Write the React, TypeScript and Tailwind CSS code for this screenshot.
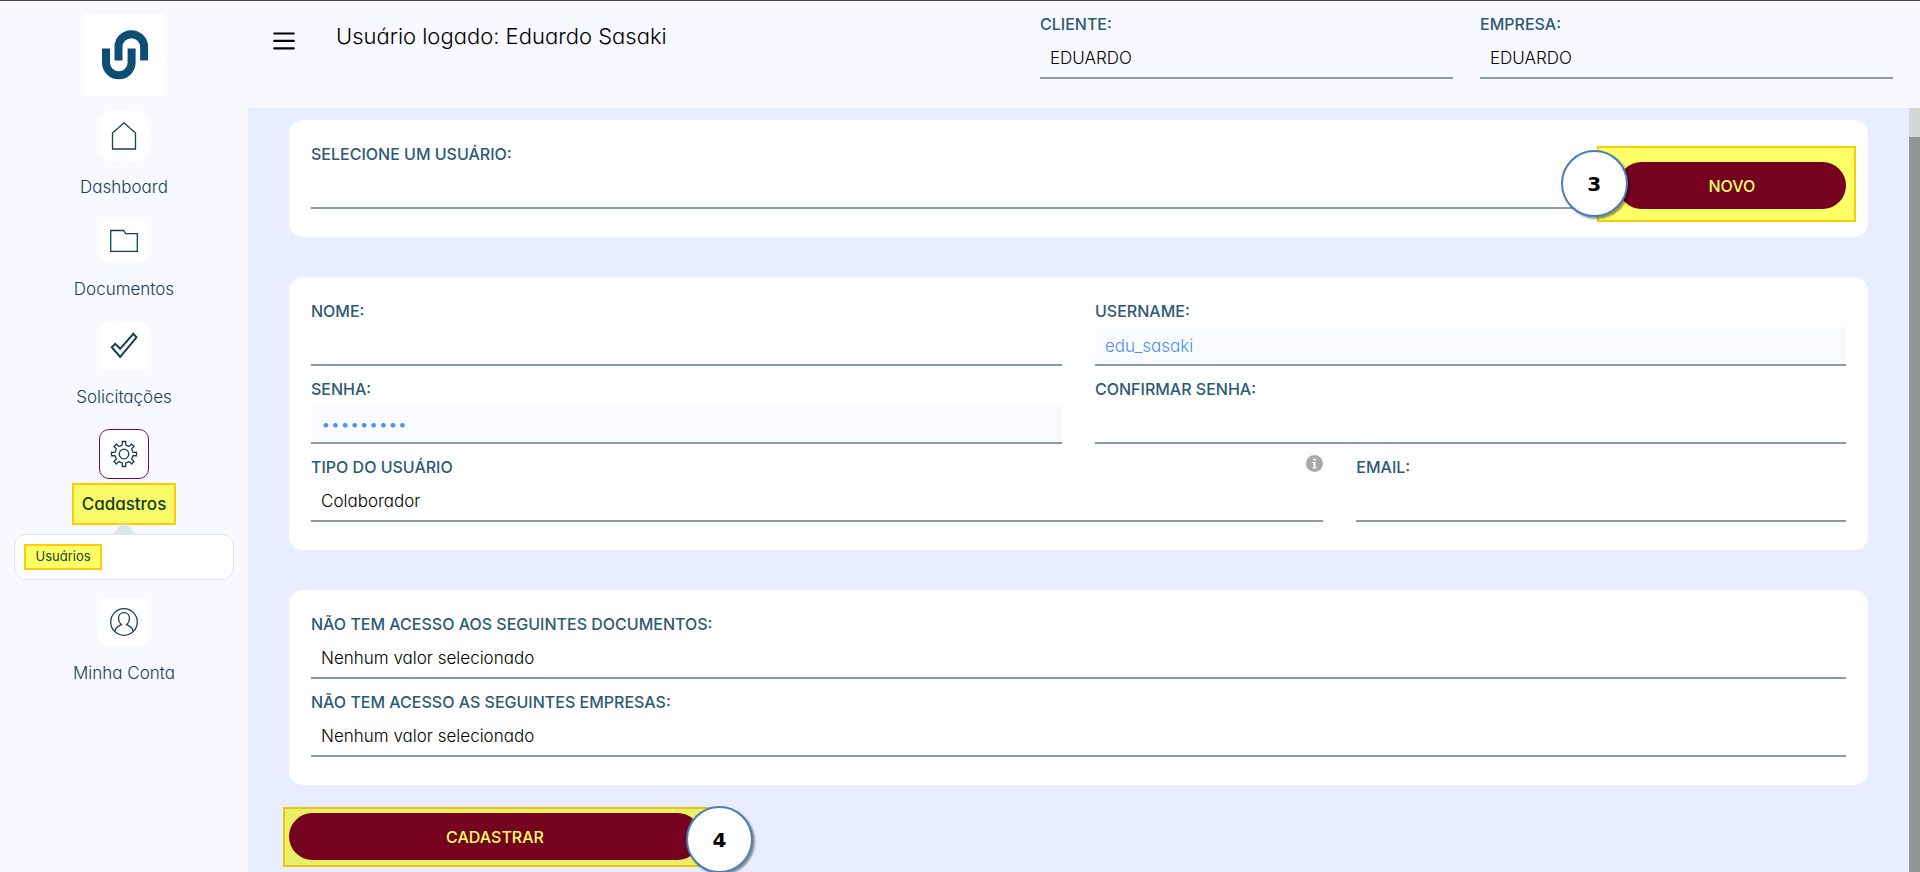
import type { ReactNode } from "react";

const GEAR = Array.from({ length: 8 }, (_, i) => {
  const at = (radius: number, offset: number) => {
    const a = ((i * 45 + offset - 90) * Math.PI) / 180;
    return `${(14 + radius * Math.cos(a)).toFixed(2)} ${(14 + radius * Math.sin(a)).toFixed(2)}`;
  };
  return `${i === 0 ? "M" : "A9 9 0 0 1 "}${at(9, -13)}L${at(9.6, -10)}L${at(12.6, -8)}L${at(12.6, 8)}L${at(9.6, 10)}L${at(9, 13)}`;
}).join("") + "Z";

function Logo() {
  return (
    <div className="flex h-[83px] w-[82px] items-center justify-center bg-white">
      <svg viewBox="-1 0 46 49" className="h-[49px] w-[46px] overflow-visible" fill="none" stroke="#0d4f74" strokeWidth="8" aria-hidden="true">
        <path d="M4 18.500v14a12.800 12.800 0 0 0 25.600 0v-14" />
        <path d="M16.500 30.500v-13.500a12.800 12.800 0 0 1 25.600 0v13.500" />
      </svg>
    </div>
  );
}

function Icon({ children }: { children: ReactNode }) {
  return (
    <svg viewBox="0 0 28 28" className="size-7" fill="none" stroke="#173f54" strokeWidth="1.3" aria-hidden="true">
      {children}
    </svg>
  );
}

function NavItem({ label, icon, tile = "h-[50px]" }: { label: string; icon: ReactNode; tile?: string }) {
  return (
    <a href="#" className="flex flex-col items-center gap-[14px] text-[17px] leading-6 text-[#173f54]">
      <span className={`flex w-[50px] items-center justify-center rounded-[10px] bg-white ${tile}`}>{icon}</span>
      {label}
    </a>
  );
}

function Sidebar() {
  return (
    <nav className="flex w-[248px] shrink-0 flex-col items-center pt-3">
      <Logo />
      <div className="mt-[15px] flex w-full flex-col items-center gap-5">
        <NavItem
          label="Dashboard"
          icon={<Icon><path d="M2.500 27V11L14 0.800 25.500 11v16z" /></Icon>}
        />
        <NavItem
          label="Documentos"
          tile="h-[44px]"
          icon={<Icon><path d="M0.700 3.500h13l2 3.200h11.600v17.600H0.700z" /></Icon>}
        />
        <NavItem
          label="Solicitações"
          icon={<Icon><path strokeWidth="2" d="M1.800 15.200l3.400-3.400 5 5L23.300 1.800l3.200 3.500L10.200 25z" /></Icon>}
        />
      </div>
      <a href="#" className="mt-5 flex flex-col items-center gap-1 text-[17px] font-medium leading-6 text-[#123f26]">
        <span className="flex size-[50px] items-center justify-center rounded-[10px] border border-[#7a0a54] bg-white">
          <Icon>
            <path d={GEAR} />
            <circle cx="14" cy="14" r="4.800" />
          </Icon>
        </span>
        <span className="flex h-[42px] w-[104px] items-center justify-center border-2 border-[#fdca0c] bg-[#f8fa66]">
          Cadastros
        </span>
      </a>
      <div className="relative mt-[9px] flex h-[46px] w-[220px] items-center rounded-xl border border-[#dbe7ea] bg-white px-[9px]">
        <svg viewBox="0 0 26 13" className="absolute -top-[13px] left-[96px] h-[13px] w-[26px]" aria-hidden="true">
          <path d="M0 13L13 0l13 13z" fill="#dbe7ea" />
          <path d="M10 3l3-3 3 3z" fill="#d8dd62" />
        </svg>
        <a href="#" className="flex h-[26px] w-[78px] items-center justify-center border-2 border-[#ffca0c] bg-[#ffff66] text-[13px] font-normal text-[#17432f]">
          Usuários
        </a>
      </div>
      <div className="mt-[17px]">
        <NavItem
          label="Minha Conta"
          icon={
            <Icon>
              <circle cx="14" cy="14" r="13.300" />
              <path d="M5 23.500c0-3.500 2.200-5 6.500-6.800-1.900-1.700-3-3.700-3-6 0-3.500 2.200-6 5.500-6s5.500 2.500 5.500 6c0 2.300-1.100 4.300-3 6 4.300 1.800 6.500 3.300 6.500 6.800" />
            </Icon>
          }
        />
      </div>
    </nav>
  );
}

const LABEL = "block text-base font-medium leading-6 text-[#2b5a75]";
const CONTROL = "mt-1 block h-[39px] w-full appearance-none rounded-none border-b-2 border-[#8b9aa8] px-[10px] text-[17px] outline-none";

function TextField({ id, label, span, value = "", type = "text" }: { id: string; label: string; span: string; value?: string; type?: string }) {
  return (
    <div className={span}>
      <label htmlFor={id} className={LABEL}>{label}</label>
      <input
        id={id}
        type={type}
        defaultValue={value}
        className={value ? `${CONTROL} bg-[#fafbfe] text-[#4d8eff]` : `${CONTROL} text-black`}
      />
    </div>
  );
}

function SelectField({ id, label, span = "", value = "", info = false }: { id: string; label: string; span?: string; value?: string; info?: boolean }) {
  return (
    <div className={span}>
      <div className="flex justify-between">
        <label htmlFor={id} className={LABEL}>{label}</label>
        {info && (
          <svg viewBox="0 0 17 17" className="size-[17px]" role="img" aria-label="Informação">
            <circle cx="8.500" cy="8.500" r="8.500" fill="#a9a9a9" />
            <path d="M8.500 3.200a1.200 1.200 0 1 1 0 2.400 1.200 1.200 0 0 1 0-2.400zM6.300 6.900h3.200v5.500h1.200v1.100H6.300v-1.100h1.200V8H6.300z" fill="#fff" />
          </svg>
        )}
      </div>
      <select id={id} className={`${CONTROL} text-black`}>
        <option>{value}</option>
      </select>
    </div>
  );
}

function Card({ children }: { children: ReactNode }) {
  return (
    <section className="grid grid-cols-12 gap-x-[33px] gap-y-[11px] rounded-[14px] bg-white px-[22px] pb-7 pt-[22px]">
      {children}
    </section>
  );
}

function Step({ n, place }: { n: number; place: string }) {
  return (
    <span className={`absolute flex size-[67px] items-center justify-center rounded-full border-2 border-[#4a7ebb] bg-white font-['DejaVu_Sans',sans-serif] text-xl font-bold text-black shadow-[2px_2px_2px_rgba(0,0,0,0.4)] ${place}`}>
      {n}
    </span>
  );
}

export default function App() {
  return (
    <div className="flex h-screen overflow-hidden border-t border-[#46464f] bg-[#f8f9ff] font-[Inter,sans-serif] font-light text-black [font-feature-settings:'cv11']">
      <Sidebar />
      <div className="flex min-w-0 flex-1 flex-col">
        <header className="flex h-[107px] shrink-0 items-start pl-[25px] pr-[27px] pt-[11px]">
          <button type="button" aria-label="Menu" className="mt-5 flex">
            <svg viewBox="0 0 22 18" className="h-[18px] w-[22px]" stroke="#000" strokeWidth="2.200" strokeLinecap="round" aria-hidden="true">
              <path d="M1.200 1.500h19.600M1.200 8.900h19.600M1.200 16.300h19.600" />
            </svg>
          </button>
          <h1 className="ml-[41px] mt-2 flex-1 text-[22px] leading-8">Usuário logado: Eduardo Sasaki</h1>
          <div className="grid w-[853px] grid-cols-2 gap-[27px]">
            <SelectField id="cliente" label="CLIENTE:" value="EDUARDO" />
            <SelectField id="empresa" label="EMPRESA:" value="EDUARDO" />
          </div>
        </header>
        <div className="flex min-h-0 flex-1 bg-[#e8eeff]">
          <main className="flex min-w-0 flex-1 flex-col gap-10 overflow-hidden pl-[41px] pr-[41px] pt-3">
            <Card>
              <SelectField id="usuario" label="SELECIONE UM USUÁRIO:" span="col-span-10" />
              <div className="relative col-span-2 flex items-end">
                <div className="absolute -bottom-[13px] -left-[21px] -right-[10px] h-[76px] border-2 border-[#ffcb08] bg-[#ffff66]" />
                <button type="button" className="relative h-[47px] w-full rounded-full bg-[#75031f] text-base font-medium text-[#ffff66]">
                  NOVO
                </button>
                <Step n={3} place="-bottom-2 -left-[57px]" />
              </div>
            </Card>
            <Card>
              <TextField id="nome" label="NOME:" span="col-span-6" />
              <TextField id="username" label="USERNAME:" span="col-span-6" value="edu_sasaki" />
              <TextField id="senha" label="SENHA:" span="col-span-6" value="123456789" type="password" />
              <TextField id="confirmar" label="CONFIRMAR SENHA:" span="col-span-6" type="password" />
              <SelectField id="tipo" label="TIPO DO USUÁRIO" span="col-span-8" value="Colaborador" info />
              <TextField id="email" label="EMAIL:" span="col-span-4" type="email" />
            </Card>
            <Card>
              <SelectField id="documentos" label="NÃO TEM ACESSO AOS SEGUINTES DOCUMENTOS:" span="col-span-12" value="Nenhum valor selecionado" />
              <SelectField id="empresas" label="NÃO TEM ACESSO AS SEGUINTES EMPRESAS:" span="col-span-12" value="Nenhum valor selecionado" />
            </Card>
            <div className="relative -mt-3 w-[412px]">
              <div className="absolute -left-[6px] -right-[10px] -top-[6px] h-[60px] border-2 border-[#eac50e] bg-[#e9ef66]" />
              <button type="button" className="relative h-[47px] w-full rounded-full bg-[#75031f] text-base font-medium text-[#ffff66]">
                CADASTRAR
              </button>
              <Step n={4} place="-right-[52px] -top-[7px]" />
            </div>
          </main>
          <div className="w-[11px] shrink-0 bg-[#949494]">
            <div className="h-[29px] bg-[#d6d6d6]" />
          </div>
        </div>
      </div>
    </div>
  );
}
